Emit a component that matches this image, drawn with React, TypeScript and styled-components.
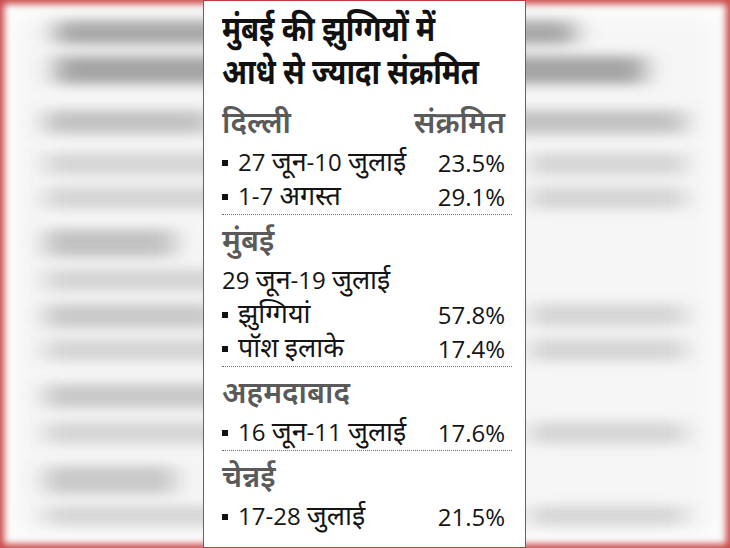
import React from "react";
import styled, { createGlobalStyle } from "styled-components";

const GlobalStyle = createGlobalStyle`
  html, body { margin: 0; padding: 0; background: #ffffff; }
  * { box-sizing: border-box; }
`;

const DEVA = `"Noto Sans Devanagari", "Lohit Devanagari", "Noto Sans", sans-serif`;
const BODY = `"Open Sans", "Noto Sans Devanagari", "Lohit Devanagari", "Noto Sans", sans-serif`;

const Stage = styled.div`
  position: relative;
  width: 730px;
  height: 548px;
  overflow: hidden;
  display: flex;
  padding-left: 203px;
  background: #ffffff;
`;

const Backdrop = styled.svg`
  position: absolute;
  inset: 0;
  width: 730px;
  height: 548px;
`;

const Vignette = styled.div`
  position: absolute;
  inset: 0;
  box-shadow: inset 0 0 7px 4px rgba(196, 52, 52, 0.9),
    inset 0 0 24px 14px rgba(255, 255, 255, 0.9);
`;

const Card = styled.article`
  position: relative;
  z-index: 1;
  width: 323px;
  height: 548px;
  background: #ffffff;
  border: 1px solid #c23b3b;
  padding: 10px 13px 0 18px;
  display: flex;
  flex-direction: column;
`;

const Title = styled.h1`
  margin: 0;
  font-family: ${DEVA};
  font-weight: 700;
  font-size: 35px;
  line-height: 43px;
  color: #111111;
  letter-spacing: -0.2px;

  span {
    display: block;
    white-space: nowrap;
    transform: scaleX(0.84);
    transform-origin: left center;
  }
`;

const HeadRow = styled.div`
  display: flex;
  justify-content: space-between;
  align-items: flex-end;
  padding-right: 7px;
  height: 49px;
`;

const Heading = styled.h2`
  margin: 0;
  font-family: ${DEVA};
  font-weight: 600;
  font-size: 30px;
  line-height: 41px;
  color: #5a5a5a;
  white-space: nowrap;
`;

const Row = styled.div`
  display: flex;
  justify-content: space-between;
  align-items: center;
  height: 34px;
  padding-right: 7px;
  font-family: ${BODY};
  font-size: 24px;
  line-height: 34px;
  color: #141414;
  white-space: nowrap;
`;

const Label = styled.span`
  display: flex;
  align-items: center;
  gap: 10px;
`;

const Bullet = styled.span`
  width: 6px;
  height: 6px;
  background: #111111;
  flex: none;
`;

const Deva = styled.span`
  font-family: ${DEVA};
  font-size: 1.12em;
`;

const Divider = styled.hr`
  margin: 0;
  border: 0;
  border-top: 1px dotted #6f6f6f;
  height: 0;
`;

type Item = { label: string; value?: string; bullet?: boolean };
type Section = { city: string; right?: string; items: Item[] };

const sections: Section[] = [
  {
    city: "दिल्ली",
    right: "संक्रमित",
    items: [
      { label: "27 जून-10 जुलाई", value: "23.5%", bullet: true },
      { label: "1-7 अगस्त", value: "29.1%", bullet: true },
    ],
  },
  {
    city: "मुंबई",
    items: [
      { label: "29 जून-19 जुलाई" },
      { label: "झुग्गियां", value: "57.8%", bullet: true },
      { label: "पॉश इलाके", value: "17.4%", bullet: true },
    ],
  },
  {
    city: "अहमदाबाद",
    items: [{ label: "16 जून-11 जुलाई", value: "17.6%", bullet: true }],
  },
  {
    city: "चेन्नई",
    items: [{ label: "17-28 जुलाई", value: "21.5%", bullet: true }],
  },
];

function Mixed({ text }: { text: string }) {
  const parts = text.split(/([\u0900-\u097F]+)/);
  return (
    <span>
      {parts.map((p, i) =>
        /[\u0900-\u097F]/.test(p) ? <Deva key={i}>{p}</Deva> : <React.Fragment key={i}>{p}</React.Fragment>
      )}
    </span>
  );
}

// blurred, stretched backdrop: [x, y, w, h, opacity]
const blobs: [number, number, number, number, number][] = [
  [55, 18, 520, 26, 0.6],
  [55, 56, 590, 28, 0.6],
  [45, 110, 165, 24, 0.38],
  [470, 110, 215, 24, 0.38],
  [45, 153, 410, 22, 0.24],
  [530, 153, 155, 22, 0.24],
  [45, 187, 280, 22, 0.24],
  [530, 187, 155, 22, 0.24],
  [45, 229, 130, 28, 0.38],
  [45, 269, 385, 22, 0.24],
  [45, 304, 175, 24, 0.32],
  [530, 304, 155, 22, 0.24],
  [45, 339, 280, 22, 0.24],
  [530, 339, 155, 22, 0.24],
  [45, 384, 305, 24, 0.34],
  [45, 422, 400, 22, 0.24],
  [530, 422, 155, 22, 0.24],
  [45, 466, 130, 28, 0.34],
  [45, 506, 335, 22, 0.24],
  [530, 506, 155, 22, 0.24],
];

export default function App() {
  return (
    <>
      <GlobalStyle />
      <Stage>
        <Backdrop viewBox="0 0 730 548" aria-hidden="true">
          <defs>
            <filter id="soft" x="-20%" y="-50%" width="140%" height="200%">
              <feGaussianBlur stdDeviation="12 6" />
            </filter>
          </defs>
          <rect width="730" height="548" fill="#f6f6f6" />
          <g filter="url(#soft)">
            {blobs.map(([x, y, w, h, o], i) => (
              <rect key={i} x={x} y={y} width={w} height={h} fill="#6e6e6e" opacity={o} />
            ))}
          </g>
        </Backdrop>
        <Vignette />
        <Card>
          <Title>
            <span>मुंबई की झुग्गियों में</span>
            <span>आधे से ज्यादा संक्रमित</span>
          </Title>
          {sections.map((s, i) => (
            <React.Fragment key={s.city}>
              <HeadRow>
                <Heading>{s.city}</Heading>
                {s.right && <Heading>{s.right}</Heading>}
              </HeadRow>
              {s.items.map((it) => (
                <Row key={it.label}>
                  <Label>
                    {it.bullet && <Bullet />}
                    <Mixed text={it.label} />
                  </Label>
                  {it.value && <span>{it.value}</span>}
                </Row>
              ))}
              {i < sections.length - 1 && <Divider />}
            </React.Fragment>
          ))}
        </Card>
      </Stage>
    </>
  );
}
